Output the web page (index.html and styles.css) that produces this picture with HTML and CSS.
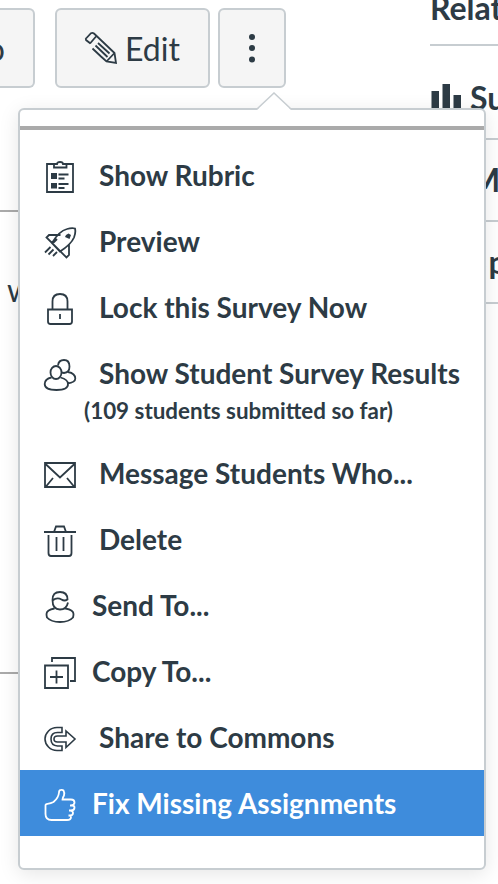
FILE: index.html
```html
<!DOCTYPE html>
<html lang="en">
<head>
<meta charset="utf-8">
<title>Survey options</title>
<link rel="stylesheet" href="styles.css">
</head>
<body>
<div class="page">
  <main class="content">
    <div class="toolbar">
      <button class="btn btn-cut">o</button>
      <button class="btn btn-edit">
        <svg class="icon" viewBox="0 0 32 32"><path d="M1.500 6 6 1.200Q7.500.300 9 1.500L29.500 21 31 31 21.500 29.500 16 24.500M7.500 16.500 16 24.500M5.500 11.500 1 8Q.3 7 1.500 6M5 11.500 11 4.500M21.500 29.500 29.500 21M10.500 13.500 22.500 25M13 11 24.500 21.500"/></svg>
        <span>Edit</span>
      </button>
      <button class="btn btn-more" aria-label="More"><svg class="dots" viewBox="0 0 8 30"><circle cx="4" cy="4" r="3"/><circle cx="4" cy="15" r="3"/><circle cx="4" cy="26.500" r="3"/></svg></button>
    </div>
    <div class="body-text">w</div>
  </main>
  <aside class="sidebar">
    <h2>Related Items</h2>
    <div class="side-item"><svg class="bars" viewBox="0 0 30 30"><path d="M.5 8H8v22H.5zM11.500 1H19v29h-7.500zM22.500 12H30v18h-7.500z"/></svg><span>Survey Statistics</span></div>
    <div class="side-item side-text"><span>Moderate</span></div>
    <div class="side-item side-text side-grader"><span>SpeedGrader</span></div>
  </aside>
</div>

<div class="menu">
  <svg class="arrow" viewBox="0 0 34 18"><path class="arrow-fill" d="M0 18 17 1 34 18Z"/><path class="arrow-line" d="M0 17 17 1 34 17"/></svg>
  <div class="divider"></div>
  <a class="item"><svg class="icon" viewBox="0 0 32 32"><path d="M9.500 3H3v28h26V3h-6.500M10 6.500V3h3q0-2 3-2t3 2h3.500v3.500ZM14.500 13.500h10M14.500 17.500h6M14.500 23h10M14.500 27h6"/><path class="solid" d="M7 12h6v6H7zM7 22h6v5.500H7z"/></svg><span>Show Rubric</span></a>
  <a class="item"><svg class="icon" viewBox="0 0 32 32"><path d="M8 16Q15 4 23 2q5-1.500 8-.500 1 4-1 9-3 7-14 14ZM16.500 8H5L2.500 10.500 22.500 30.500 25 28V17M8.500 16.500 13 12M6.500 20 1 25.500M9.500 22.500 4.500 27.500M13 25 9 29"/><path class="solid" d="m22 8 2.500-1.500L27 8l-1.500 4L21 10z"/></svg><span>Preview</span></a>
  <a class="item"><svg class="icon" viewBox="0 0 32 32"><path d="M4 16.500h24v12q0 2.500-2.500 2.500h-19Q4 31 4 28.500ZM8.500 16.500V8.500q0-7.500 7.500-7.500t7.500 7.500v8M16 21v5"/></svg><span>Lock this Survey Now</span></a>
  <a class="item item-tall"><svg class="icon" viewBox="0 0 32 32"><ellipse cx="12" cy="13.500" rx="5.500" ry="6.500"/><path d="M7.500 18.500Q.7 20 .7 25q0 6 11.800 6T24 25q0-4.500-7.500-6.500M14 6.500Q14.500 1 20 1t5.500 6.500q0 6-5.500 6.500l-2.500-.500M24 13q7.300 1.500 7.300 6.500 0 4-8 5"/></svg><span>Show Student Survey Results<small>(109 students submitted so far)</small></span></a>
  <a class="item"><svg class="icon" viewBox="0 0 32 32"><path d="M1 4h30v24H1ZM1 4.500 16 18.500 31 4.500M2 27.500 9 19M30 27.500 23 19"/></svg><span>Message Students Who...</span></a>
  <a class="item"><svg class="icon" viewBox="0 0 32 32"><path d="M0 7h32M10 7l2-5.500h8L22 7M4.500 10v18q0 3 2.500 3h18q2.500 0 2.500-3V10M12.500 12v14M19.500 12v14"/></svg><span>Delete</span></a>
  <a class="item item-near"><svg class="icon" viewBox="0 0 32 32"><path d="M24 11.500q-1.500 7-8 7-7.500 0-7.500-9.500Q8.500 1 16 1q7.500 0 7.500 7.500-3 2-6 0-4.500-2.500-9 1M10.500 17.500Q2.500 19 2.500 23q0 1.500.5 3.500 4 4.500 13 4.500t13-4.500q.500-2 .500-3.500 0-4-8-5.500"/></svg><span>Send To...</span></a>
  <a class="item item-near"><svg class="icon" viewBox="0 0 32 32"><path d="M1 8.500h23v22.500H1ZM8 5V1h23v23h-5M12.500 13.500v13M6 20h13"/></svg><span>Copy To...</span></a>
  <a class="item"><svg class="icon" viewBox="0 0 32 32"><path class="thin" d="M18 4.500H13Q8 4.500 4.500 8T1 16t3.500 8T13 27.500h5v-4.500h-4.500Q7 22.500 7 16t6.500-6.500H18ZM22 8v5H13.500q-3.500 0-3.500 3t3.500 3H22v5.500L31 16Z"/></svg><span>Share to Commons</span></a>
  <a class="item item-near item-active"><svg class="icon" viewBox="0 0 32 32"><path d="M1.500 16.500V25q0 6 6 6H23q4 0 4-3 0-1.500-1.500-1.500h-1 1.500q3 0 3-2.500 0-2-2.500-2.500H25h2q3.500 0 3.500-3 0-2-2.500-2h-2 1q3.500-.500 3.500-3 0-3-3.500-3H18.500q0-1.500 1.500-4 .700-3-.500-5Q18.500.5 17 .9q-2 .100-2 2.600-.500 5.500-5.500 9.500-2.500 1.500-6 1.800-2 .2-2 1.700Z"/></svg><span>Fix Missing Assignments</span></a>
</div>
</body>
</html>
```
FILE: styles.css
```css
* { box-sizing: border-box; }
html, body { margin: 0; height: 100%; overflow: hidden; }
body {
  background: #fff;
  color: #2d3b45;
  font-family: Lato, "Liberation Sans", sans-serif;
}
.page { display: flex; gap: 144px; height: 884px; overflow: hidden; }
.content { width: 286px; flex: none; }
.toolbar { display: flex; padding-top: 8px; }
.btn {
  height: 80px;
  padding: 0;
  display: flex;
  align-items: center;
  justify-content: center;
  border: 2px solid #c7cdd1;
  border-radius: 6px;
  background: #f5f5f5;
  color: inherit;
  font: 32px/41px Lato, sans-serif;
}
.btn-cut { width: 35px; margin-right: 20px; border-left: 0; border-radius: 0 6px 6px 0; justify-content: flex-end; padding-right: 28px; }
.btn-edit { width: 155px; margin-right: 8px; gap: 8px; }
.btn-edit span { padding-top: 1px; }
.btn-more { width: 68px; }
.icon {
  width: 32px;
  height: 32px;
  flex: none;
  fill: none;
  stroke: currentColor;
  stroke-width: 1.8;
  overflow: visible;
}
.solid { fill: currentColor; stroke: none; }
.thin { stroke-width: 1.6; }
.dots { width: 8px; height: 30px; fill: currentColor; }
.body-text {
  height: 464px;
  margin-top: 122px;
  padding: 58px 0 0 7px;
  border-top: 2px solid #aaa;
  border-bottom: 2px solid #aaa;
  font-size: 32px;
  line-height: 40px;
}
.sidebar {
  width: 300px;
  flex: none;
  font-weight: 700;
  font-size: 32px;
  line-height: 38px;
  white-space: nowrap;
}
.sidebar h2 {
  height: 57px;
  margin: -11px 0 12px;
  border-bottom: 2px solid #c7cdd1;
  font-size: 32px;
}
.side-item {
  display: flex;
  align-items: center;
  gap: 9px;
  height: 82px;
  padding: 0 0 0 1px;
  border-bottom: 2px solid #c7cdd1;
}
.bars { width: 30px; height: 30px; flex: none; fill: currentColor; }
.side-text { padding-left: 40px; }
.side-grader { padding-left: 39px; }
.side-grader span::first-letter { letter-spacing: 2px; }
.menu {
  position: absolute;
  left: 18px;
  top: 108px;
  width: 468px;
  height: 762px;
  padding-top: 16px;
  border: 2px solid #c7cdd1;
  border-radius: 6px;
  background: #fff;
  box-shadow: 0 4px 20px rgba(0, 0, 0, .1);
}
.arrow { position: absolute; left: 237px; top: -18px; width: 34px; height: 18px; }
.arrow-fill { fill: #fff; }
.arrow-line { fill: none; stroke: #c7cdd1; stroke-width: 1.5; }
.divider { height: 4px; margin-bottom: 12px; background: #aaa; }
.item {
  display: flex;
  gap: 23px;
  height: 66px;
  padding: 19px 0 0 24px;
  font-size: 28px;
  font-weight: 700;
  line-height: 32px;
  white-space: nowrap;
}
.item > span { margin-top: -2px; }
.item-near { gap: 16px; }
.item-tall { height: 100px; }
.item small { display: block; margin: 6px 0 0 -15px; font-size: 22.4px; line-height: 32px; }
.item-active { background: #3e8cdc; color: #fff; }
```
